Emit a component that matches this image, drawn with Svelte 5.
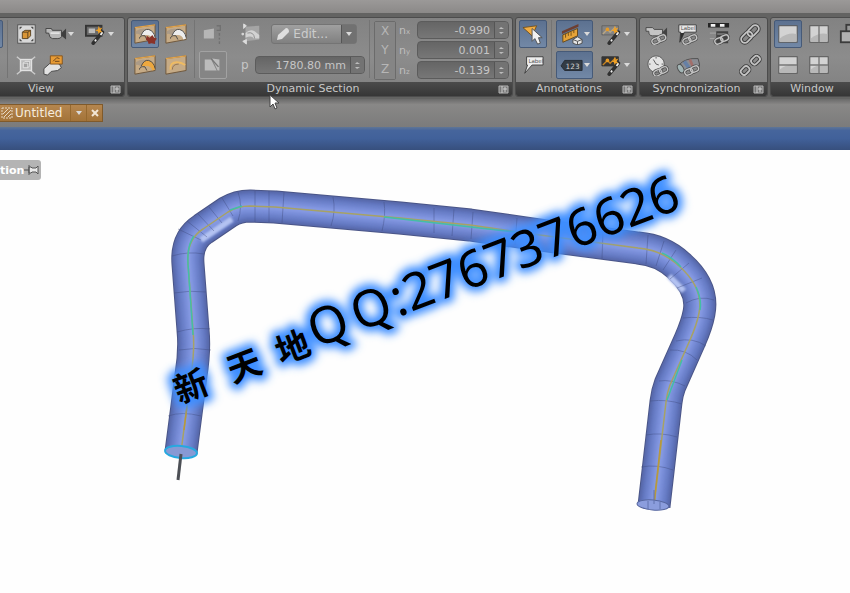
<script>
  let normals = $state([
    { axis: "X", sub: "x", value: "-0.990" },
    { axis: "Y", sub: "y", value: "0.001" },
    { axis: "Z", sub: "z", value: "-0.139" },
  ]);
  let position = $state("1780.80 mm");

  const spine =
    "M181 452 L191 375 Q195 350 193 330 L188 264 Q186 240 203 229 L228 212 Q238 206 250 206 L275 207 L400 218 L470 225 L540 235 L638 248 Q662 250 679 266 Q704 288 699 313 Q697 324 690 340 L670 385 Q667 393 666 402 L654 506";

  // layered strokes, widest first, give the pipe its round shading
  const shades = [
    { width: 33, color: "#4b5688" },
    { width: 31, color: "#5768a9" },
    { width: 27, color: "#6074bd" },
    { width: 21, color: "#6c81cb" },
    { width: 14, color: "#788dd8" },
    { width: 7, color: "#8599e2" },
  ];

  const seams = [
    "M168 416Q182 411 201 416",
    "M179 350Q195 347 211 350",
    "M177 332Q194 327 210 329",
    "M174 293Q190 290 206 292",
    "M172 256Q188 251 204 254",
    "M178 229L201 240",
    "M187 221L207 237",
    "M198 214L214 231",
    "M209 207L222 223",
    "M222 198L233 216",
    "M238 192Q243 206 238 221",
    "M255 191V222",
    "M269 191V222",
    "M284 192L282 223",
    "M333 197Q336 211 331 226",
    "M384 202Q386 215 382 231",
    "M434 208V233",
    "M454 209L452 236",
    "M473 212L471 239",
    "M517 218L515 245",
    "M603 230L602 259",
    "M648 235L646 264",
    "M664 241L656 266",
    "M676 250L663 270",
    "M689 263L670 279",
    "M702 278L677 288",
    "M714 300Q700 295 686 303",
    "M713 320Q700 316 683 318",
    "M706 346Q693 337 676 341",
    "M697 360Q686 349 670 350",
    "M685 386Q671 379 659 381",
    "M682 404Q667 399 650 401",
    "M677 437Q661 432 646 435",
    "M673 470Q657 464 641 467",
  ];
</script>

{#snippet link(x, y)}
  <g transform="translate({x} {y}) rotate(-25)" fill="none">
    <rect x="-8" y="-3" width="9" height="6" rx="3" stroke="#4c4c4c" stroke-width="3" />
    <rect x="-1" y="-3" width="9" height="6" rx="3" stroke="#4c4c4c" stroke-width="3" />
    <rect x="-8" y="-3" width="9" height="6" rx="3" stroke="#c4c4c4" stroke-width="1.5" />
    <rect x="-1" y="-3" width="9" height="6" rx="3" stroke="#c4c4c4" stroke-width="1.5" />
  </g>
{/snippet}

{#snippet wand()}
  <path d="M10 22L20 10" stroke="#303030" stroke-width="4" stroke-linecap="round" />
  <path d="M12 20L13 18M18 13L20 10" stroke="#eee" stroke-width="2" />
  <path d="M16 3l1 3 3-1-2 3 2 2-3 0-1 2-1-3-3-1 3-1z" fill="#f0a125" />
{/snippet}

{#snippet icon(name)}
  <svg class="icon" viewBox="0 0 26 24" width="24" height="22" aria-hidden="true">
    {#if name === "fit"}
      <rect x="4" y="2" width="19" height="20" fill="#d9d9d9" stroke="#4f4f4f" />
      <path d="M6 4h3L6 7zM21 4h-3l3 3zM6 20h3l-3-3zM21 20h-3l3-3z" fill="#4a4a4a" />
      <path d="M9 10l3-2h6v6l-3 3H9z" fill="#d99535" stroke="#57401f" />
      <path d="M9 10h6v7M15 10l3-2" fill="none" stroke="#57401f" />
    {:else if name === "zoombox"}
      <path d="M3 3l5 4M23 3l-5 4M3 22l5-4M23 22l-5-4" stroke="#ccc" stroke-width="1.5" />
      <rect x="7" y="6" width="12" height="12" fill="#bcbcbc" stroke="#e2e2e2" stroke-width="1.5" />
      <path d="M10 10l2-2h5v5l-2 2h-5zM10 10h5v5" fill="#a2a2a2" stroke="#e8e8e8" />
    {:else if name === "camera"}
      <path d="M2 6h6l1 2h10v7q-1 2-4 2H9q-3 0-4-6H2z" fill="#b8b8b8" stroke="#424242" />
      <path d="M19 11l5-5v12l-5-4z" fill="#3e3e3e" />
      <path d="M7 11h10" stroke="#e2e2e2" stroke-width="2" />
    {:else if name === "viewwand"}
      <rect x="2" y="3" width="17" height="11" fill="#696969" stroke="#343434" stroke-width="2" />
      <rect x="5" y="6" width="7" height="5" fill="#bbb" />
      {@render wand()}
    {:else if name === "hand"}
      <path d="M2 22V16l9-8 8 3 2 4-4 3-7 1-4 4z" fill="#e2e2e2" stroke="#454545" />
      <path d="M9 2h13v9H9z" fill="#e99c35" stroke="#80521d" />
      <path d="M12 8l4-4 3 1M14 8h5" stroke="#654019" fill="none" />
    {:else if name === "section" || name === "sectionoff" || name === "sectionfill" || name === "sectioncurve"}
      <path d="M2 5l22-3v16L2 22z" fill="#c6ab86" stroke="#6b5338" />
      <path d="M2 5l22-3" stroke="#e2a44c" stroke-width="1.5" />
      {#if name === "sectioncurve"}
        <path d="M7 17q-1-8 7-8 5 0 9 3" fill="none" stroke="#efbb62" stroke-width="2" />
        <path d="M9 17q0-6 7-6" fill="none" stroke="#94714a" />
      {:else}
        <path d="M3 9q6-4 12-2l8 5v3l-8-3-7 2q-1-3-5-2z" fill="#ab9b88" />
        <path d="M9 13q2-6 7-6 6 1 8 7v3l-3 1q-1-5-6-5-3 0-6 0z" fill={name === "sectionfill" ? "#eda83f" : "#ededed"} />
        <path d="M9 13q3-7 8-6 6 2 7 9M7 17q0-4 6-3l2 4" fill="none" stroke="#444" />
      {/if}
      {#if name === "sectionoff"}
        <path d="M15 14l3 2 3-3 2 3 3 1-2 3v3l-4-1-3 1-1-3-2-2z" fill="#8a3228" />
      {/if}
    {:else if name === "plane"}
      <path d="M3 8l11-2v11H3z" fill="#b6b6b6" />
      <path d="M17 3h4v5h-4M20 11v3M20 16v2M20 20v3" stroke="#717171" stroke-width="1.5" fill="none" />
    {:else if name === "points"}
      <path d="M7 4l15-1v15L7 20z" fill="#a5a5a5" />
      <path d="M7 11q5-5 10-2l5 4v4h-6q-2-4-9-1z" fill="#d2d2d2" />
      <path d="M9 11q7-2 8 6" stroke="#8b8b8b" fill="none" />
      <path d="M5 1l3 2-3 3zM4 20l4-2v5z" fill="#ddd" stroke="#ddd" />
      <circle cx="4" cy="12" r="1.5" fill="#d5d5d5" />
    {:else if name === "flip"}
      <path d="M4 6h7l6 12H4zM12 5l8 1v12h-2z" fill="#bcbcbc" />
      <path d="M11 5l8 9" stroke="#777" stroke-width="1.5" />
    {:else if name === "pointer"}
      <path d="M2 5l15-2-5 11z" fill="#f1ad43" stroke="#72501e" />
      <path d="M12 6v14l3-3 3 6 3-1-2-6h4z" fill="#f2f2f2" stroke="#505050" />
    {:else if name === "measure"}
      <path d="M2 9L20 1v3L2 12z" fill="#6e3f31" />
      <path d="M3 13l16-7v8L3 21z" fill="#e6a439" stroke="#664617" />
      <path d="M6 12v4M9 11v3M12 10v4M15 8v3" stroke="#6f4c18" />
      <path d="M14 18l5-3 5 3v4l-5 2-5-2z" fill="#e6e6e6" stroke="#4a4a4a" />
      <path d="M14 18l5 2 5-2M19 20v4" stroke="#4a4a4a" fill="none" />
    {:else if name === "measurewand" || name === "tagwand"}
      <path d="M2 3h18v10H2z" fill={name === "tagwand" ? "#353535" : "#858585"} stroke={name === "tagwand" ? "#353535" : "#606060"} />
      <path d="M3 12l5-5 3 3 6-6" stroke={name === "tagwand" ? "#c48222" : "#b9a582"} stroke-width="1.5" fill="none" />
      <circle cx="8" cy="7" r="2" fill="#e69a25" />
      {@render wand()}
    {:else if name === "label"}
      <path d="M6 3h18v9H12L4 21l3-9H6z" fill="#ededed" stroke="#3b3b3b" />
      <text x="8" y="10" font-size="6" fill="#555">Label</text>
    {:else if name === "tag"}
      <path d="M5 7h19v11H5l-4-5z" fill="#333b44" stroke="#232a32" />
      <text x="6" y="16" font-size="8" fill="#d2d2d2">123</text>
    {:else if name === "cameralink"}
      <path d="M1 5h7l2 2h9v7H8q-4 0-4-5H1z" fill="#c4c4c4" stroke="#474747" />
      <path d="M19 10l5-5v12z" fill="#424242" />
      {@render link(15, 18)}
    {:else if name === "labellink"}
      <path d="M3 2h19v8H9L4 21l1-11H3z" fill="#e8e8e8" stroke="#3b3b3b" />
      <path d="M5 11h4L4 21z" fill="#2e2e2e" />
      <text x="5" y="8" font-size="6" fill="#555">Label</text>
      {@render link(15, 18)}
    {:else if name === "timeline"}
      <path d="M1 0h23v5H1z" fill="#252525" />
      <path d="M4 1h5v3H4zM14 1h5v3h-5z" fill="#f3f3f3" />
      <path d="M3 11h7M3 17h7" stroke="#aaa" />
      <path d="M10 9h13v13H10z" fill="#414141" />
      <path d="M11 12h10" stroke="#aaa" />
      {@render link(16, 18)}
    {:else if name === "chain"}
      <g transform="translate(13 12) rotate(-45)" fill="none">
        <rect x="-12" y="-4" width="14" height="8" rx="4" stroke="#3e3e3e" stroke-width="4" />
        <rect x="-2" y="-4" width="14" height="8" rx="4" stroke="#3e3e3e" stroke-width="4" />
        <rect x="-12" y="-4" width="14" height="8" rx="4" stroke="#c3c3c3" stroke-width="2" />
        <rect x="-2" y="-4" width="14" height="8" rx="4" stroke="#c3c3c3" stroke-width="2" />
      </g>
    {:else if name === "unchain"}
      <g transform="translate(13 12) rotate(-45)" fill="none">
        <rect x="-13" y="-3" width="10" height="7" rx="3" stroke="#3e3e3e" stroke-width="4" />
        <rect x="3" y="-3" width="10" height="7" rx="3" stroke="#3e3e3e" stroke-width="4" />
        <rect x="-13" y="-3" width="10" height="7" rx="3" stroke="#c3c3c3" stroke-width="2" />
        <rect x="3" y="-3" width="10" height="7" rx="3" stroke="#c3c3c3" stroke-width="2" />
      </g>
    {:else if name === "clock"}
      <circle cx="12" cy="11" r="9" fill="#e3e3e3" stroke="#565656" />
      <path d="M12 3v2M4 11h2M18 11h2M9 6l3 5 3 1" stroke="#555" fill="none" />
      {@render link(17, 19)}
    {:else if name === "tube"}
      <path d="M3 12Q10 4 24 5l2 8q-10-1-16 7z" fill="#8b8d93" stroke="#4e4e4e" />
      <path d="M9 8l5 7" stroke="#6680a6" stroke-width="4" />
      <path d="M15 6l3 7" stroke="#a26f6b" stroke-width="3" />
      <ellipse cx="5" cy="16" rx="3" ry="5" fill="#a2b5b5" stroke="#4e4e4e" transform="rotate(-30 5 16)" />
      {@render link(17, 18)}
    {:else if name === "cascade"}
      <rect x="9" y="2" width="17" height="12" fill="#989898" stroke="#3b3b3b" stroke-width="2" />
      <rect x="3" y="9" width="17" height="12" fill="#b0b0b0" stroke="#3b3b3b" stroke-width="2" />
    {:else}
      <rect x="3" y="3" width="20" height="18" fill="#d3d3d3" stroke="#515151" />
      <path d="M4 17q9-7 18-5v8H4z" fill="#b8b8b8" />
      {#if name === "split-v" || name === "split-4"}
        <path d="M13 3v18" stroke="#777" stroke-width="1.5" />
      {/if}
      {#if name === "split-h" || name === "split-4"}
        <path d="M3 12h20" stroke="#777" stroke-width="1.5" />
      {/if}
    {/if}
  </svg>
{/snippet}

{#snippet tool(name, on = false, menu = false)}
  <button class="tool" class:on class:menu aria-label={name}>
    {@render icon(name)}
    {#if menu}<span class="arrow"></span>{/if}
  </button>
{/snippet}

{#snippet caption(text)}
  <div class="caption">
    <span>{text}</span>
    <button class="launcher" aria-label="{text} options">
      <svg viewBox="0 0 11 9" width="11" height="9" aria-hidden="true">
        <path d="M1 1h9v7H1z" fill="#777" stroke="#b5b5b5" />
        <path d="M4 1v7M5 4h4M7 2v5" stroke="#d0d0d0" />
      </svg>
    </button>
  </div>
{/snippet}

{#snippet spinner()}
  <button class="spin" aria-label="step">
    <svg viewBox="0 0 7 9" width="7" height="9" aria-hidden="true">
      <path d="M1 3l2-2 3 2zM1 6h5L3 8z" fill="#bcbcbc" />
    </svg>
  </button>
{/snippet}

<div class="app">
  <div class="titlebar"></div>
  <nav class="ribbon">
    <section class="group view">
      <div class="body">
        <div class="tools one">{@render tool("home", true)}</div>
        <i class="sep"></i>
        <div class="tools one">
          {@render tool("fit")}
          {@render tool("zoombox")}
        </div>
        <div class="tools two">
          {@render tool("camera", false, true)}
          {@render tool("viewwand", false, true)}
          {@render tool("hand")}
        </div>
      </div>
      {@render caption("View")}
    </section>

    <section class="group">
      <div class="body">
        <div class="tools two">
          {@render tool("sectionoff", true)}
          {@render tool("section")}
          {@render tool("sectionfill")}
          {@render tool("sectioncurve")}
        </div>
        <i class="sep"></i>
        <div class="tools one">
          {@render tool("plane")}
          <button class="tool framed" aria-label="flip">{@render icon("flip")}</button>
        </div>
        <div class="edit">
          <div class="row">
            {@render tool("points")}
            <button class="edit-button">
              <svg viewBox="0 0 14 14" width="14" height="14" aria-hidden="true">
                <path d="M1 13l1-5 8-7q3 0 3 4l-7 7z" fill="#dedede" />
              </svg>
              <span>Edit...</span>
              <span class="drop"><span class="arrow"></span></span>
            </button>
          </div>
          <div class="row">
            <label for="position">p</label>
            <div class="field"><input id="position" bind:value={position} />{@render spinner()}</div>
          </div>
        </div>
        <i class="sep"></i>
        <div class="axes">
          {#each normals as n (n.axis)}
            <button>{n.axis}</button>
          {/each}
        </div>
        <div class="normals">
          {#each normals as n (n.axis)}
            <label for="n-{n.sub}">n<small>{n.sub}</small></label>
            <div class="field"><input id="n-{n.sub}" bind:value={n.value} />{@render spinner()}</div>
          {/each}
        </div>
      </div>
      {@render caption("Dynamic Section")}
    </section>

    <section class="group">
      <div class="body">
        <div class="tools one">
          {@render tool("pointer", true)}
          {@render tool("label")}
        </div>
        <i class="sep"></i>
        <div class="tools two">
          {@render tool("measure", true, true)}
          {@render tool("measurewand", false, true)}
          {@render tool("tag", true, true)}
          {@render tool("tagwand", false, true)}
        </div>
      </div>
      {@render caption("Annotations")}
    </section>

    <section class="group">
      <div class="body">
        <div class="tools four">
          {@render tool("cameralink")}
          {@render tool("labellink")}
          {@render tool("timeline")}
          {@render tool("chain")}
          {@render tool("clock")}
          {@render tool("tube")}
          <span></span>
          {@render tool("unchain")}
        </div>
      </div>
      {@render caption("Synchronization")}
    </section>

    <section class="group">
      <div class="body">
        <div class="tools three">
          {@render tool("single", true)}
          {@render tool("split-v")}
          {@render tool("cascade")}
          {@render tool("split-h")}
          {@render tool("split-4")}
        </div>
      </div>
      {@render caption("Window")}
    </section>
  </nav>

  <div class="tabs">
    <div class="tab">
      <svg viewBox="0 0 12 12" width="12" height="12" aria-hidden="true">
        <path d="M1 1h10v10H1z" fill="none" stroke="#e8d9c4" stroke-dasharray="2 1" />
        <path d="M2 7l5-5M3 10l7-7M7 10l3-3" stroke="#e8d9c4" />
      </svg>
      <span class="name">Untitled</span>
      <button aria-label="tab menu"><span class="arrow"></span></button>
      <button aria-label="close">
        <svg viewBox="0 0 8 8" width="8" height="8" aria-hidden="true">
          <path d="M1 1l6 6M7 1L1 7" stroke="#f3e6d4" stroke-width="2" />
        </svg>
      </button>
    </div>
  </div>
  <div class="header"></div>

  <main class="viewport">
    <div class="pinned">
      <span>tion</span>
      <svg viewBox="0 0 16 12" width="16" height="12" aria-hidden="true">
        <path d="M0 6h5M5 1v10M5 3h2l1 1h4l2-2v8l-2-2H8L7 9H5z" fill="#e8e8e8" stroke="#555" />
      </svg>
    </div>
    <svg class="scene" viewBox="0 150 850 443">
      <defs>
        <filter id="soft" x="-10%" y="-10%" width="120%" height="120%">
          <feGaussianBlur stdDeviation="1" />
        </filter>
        <filter id="glow" filterUnits="userSpaceOnUse" x="-320" y="-100" width="700" height="200">
          <feGaussianBlur stdDeviation="4" />
        </filter>
      </defs>

      <g fill="none" stroke-linejoin="round">
        {#each shades as shade, i (shade.width)}
          <path d={spine} stroke={shade.color} stroke-width={shade.width} filter={i > 1 ? "url(#soft)" : null} />
        {/each}
        <path d="M201 240L232 219M669 276L684 291" stroke="#b4c3f2" stroke-width="6" filter="url(#soft)" />
        <g stroke="#3e4a7c" opacity="0.4">
          {#each seams as seam (seam)}
            <path d={seam} />
          {/each}
        </g>
        <path d={spine} stroke="#a7a264" stroke-width="1.5" />
        <path
          d="M193 335L188 264Q187 245 194 236M230 210L242 206M384 217L515 232M662 253Q672 257 681 267M696 287Q702 300 700 310M682 360L667 400"
          stroke="#43bea6"
          stroke-width="1.5"
        />
        <path d="M184 430L191 375M661 440L654 504" stroke="#b8983d" stroke-width="1.5" />
      </g>
      <ellipse cx="181" cy="452" rx="16" ry="6" fill="#8799d4" stroke="#27a8df" stroke-width="2" transform="rotate(5 181 452)" />
      <path d="M181 454L178 480" stroke="#4c4f55" stroke-width="3" />
      <ellipse cx="653" cy="505" rx="16" ry="5" fill="#8b9ddd" stroke="#56669f" transform="rotate(5 653 505)" />
      <path d="M648 501v8M654 490v14M660 502v7" stroke="#6173ae" />

      <g transform="translate(411 312) rotate(-21)">
        {#each ["halo", "ink"] as layer (layer)}
          <g class="mark {layer}">
            <text class="han" x="-249 -192 -140" y="3">新天地</text>
            <text x="-102 -56 -14" y="0">QQ:</text>
            <text x="0" y="0">2767376626</text>
          </g>
        {/each}
      </g>
    </svg>
  </main>

  <svg class="cursor" viewBox="0 0 10 16" width="10" height="16" aria-hidden="true">
    <path d="M1 1v12l3-3 2 5 2-1-2-5h4z" fill="#fff" stroke="#444" />
  </svg>
</div>

<style>
  :global(body) {
    background: #fefefe;
  }

  .app {
    position: relative;
    overflow: hidden;
    min-height: 100vh;
    font-family: "DejaVu Sans", Verdana, sans-serif;
    font-size: 11px;
    color: #d4d4d4;
  }

  button,
  input {
    font: inherit;
    color: inherit;
    margin: 0;
    padding: 0;
    border: 0;
    background: none;
  }

  svg {
    display: block;
    flex: none;
  }

  .titlebar {
    height: 13px;
    background: linear-gradient(#9b9998, #8b8988);
  }

  .ribbon {
    display: flex;
    gap: 2px;
    padding: 4px 0 2px;
    overflow: hidden;
    background: #636362;
    box-sizing: border-box;
  }

  .group {
    flex: none;
    border: 1px solid #4c4c4c;
    border-radius: 3px;
    background: linear-gradient(#828282, #8c8c8c 50%, #7f7f7f);
    overflow: hidden;
  }

  .view {
    margin-left: -29px;
  }

  .view .body {
    padding-right: 7px;
  }

  .body {
    display: flex;
    align-items: flex-start;
    height: 64px;
    padding: 2px 3px 0;
    box-sizing: border-box;
  }

  .tools {
    display: grid;
    gap: 3px;
    justify-items: start;
  }

  .two {
    grid-template-columns: auto auto;
  }

  .three {
    grid-template-columns: repeat(3, auto);
  }

  .four {
    grid-template-columns: repeat(4, auto);
  }

  .tool {
    display: flex;
    align-items: center;
    justify-content: center;
    width: 28px;
    height: 28px;
    border: 1px solid transparent;
    border-radius: 2px;
    box-sizing: border-box;
  }

  .tool.menu {
    width: 37px;
  }

  .tool.on {
    border-color: #465a78;
    background: linear-gradient(#5c7190, #7288a6);
  }

  .framed {
    border-color: #a2a2a2;
    background: #858585;
  }

  .arrow {
    flex: none;
    border: 3px solid transparent;
    border-top: 4px solid #dadada;
    border-bottom: 0;
  }

  .sep {
    width: 1px;
    height: 58px;
    margin: 0 4px;
    background: #747474;
  }

  .caption {
    display: flex;
    align-items: center;
    height: 14px;
    padding-right: 3px;
    background: linear-gradient(#4b4b4b, #363636);
    color: #c8c8c8;
    line-height: 14px;
    text-align: center;
  }

  .caption span {
    flex: 1;
  }

  .edit {
    display: flex;
    flex-direction: column;
    gap: 3px;
    width: 128px;
    margin-left: 10px;
  }

  .row {
    display: flex;
    align-items: center;
    justify-content: space-between;
    height: 28px;
  }

  .row label {
    margin-left: 4px;
    font-size: 12px;
    color: #c6c6c6;
  }

  .edit-button {
    display: flex;
    align-items: center;
    gap: 3px;
    height: 20px;
    margin-right: 8px;
    padding-left: 4px;
    border: 1px solid #747474;
    border-radius: 3px;
    background: linear-gradient(#a0a0a0, #808080);
    color: #ccc;
    font-size: 12px;
    box-sizing: border-box;
  }

  .drop {
    display: flex;
    align-items: center;
    height: 18px;
    margin-left: 10px;
    padding: 0 4px;
    border-left: 1px solid #555;
    background: #717171;
  }

  .field {
    display: flex;
    align-items: center;
    height: 18px;
    border: 1px solid #5c5c5c;
    border-radius: 4px;
    background: linear-gradient(#656565, #777);
    color: #c6c6c6;
    overflow: hidden;
    box-sizing: border-box;
  }

  .row .field {
    width: 110px;
  }

  .field input {
    flex: 1;
    min-width: 0;
    padding-right: 4px;
    text-align: right;
    outline: none;
  }

  .spin {
    display: flex;
    align-items: center;
    justify-content: center;
    width: 14px;
    height: 16px;
    border-left: 1px solid #555;
    background: #737373;
  }

  .axes {
    display: flex;
    flex-direction: column;
    border: 1px solid #6b6b6b;
    border-radius: 2px;
    margin-top: 1px;
  }

  .axes button {
    width: 20px;
    height: 19px;
    background: #858585;
    color: #b6b6b6;
    font-size: 12px;
    line-height: 19px;
  }

  .normals {
    display: grid;
    grid-template-columns: 14px 92px;
    gap: 2px 4px;
    align-items: center;
    margin: 1px 0 0 3px;
    color: #bebebe;
  }

  .normals small {
    font-size: 7px;
  }

  .tabs {
    padding: 5px 0 5px;
    background: linear-gradient(#6a6a6a, #898887 20%, #7b7b7b);
  }

  .tab {
    display: inline-flex;
    align-items: center;
    height: 18px;
    padding-left: 1px;
    border: 1px solid #805a2b;
    border-left: 0;
    background: linear-gradient(#b5864f, #a37338);
    color: #f6ecdd;
    font-size: 12px;
    box-sizing: border-box;
    vertical-align: top;
  }

  .name {
    margin: 0 8px 0 2px;
  }

  .tab button {
    display: flex;
    align-items: center;
    justify-content: center;
    width: 16px;
    height: 16px;
    border-left: 1px solid #96692f;
  }

  .header {
    height: 23px;
    background: linear-gradient(#5f7596, #46659c 15%, #41619a 50%, #374f7d);
  }

  .viewport {
    position: relative;
    background: #fefefe;
  }

  .pinned {
    position: absolute;
    left: 0;
    top: 10px;
    display: flex;
    align-items: center;
    height: 20px;
    padding-right: 1px;
    border-radius: 0 3px 3px 0;
    background: #b4b4b4;
    color: #fff;
    font-size: 11px;
    font-weight: bold;
  }

  .scene {
    width: 100%;
    height: auto;
  }

  .mark {
    font-family: "Noto Sans", "Open Sans", sans-serif;
    font-size: 51px;
  }

  .han {
    font-family: "Noto Sans CJK SC", sans-serif;
    font-size: 34px;
    font-weight: bold;
  }

  .halo {
    fill: #3d8eff;
    stroke: #3d8eff;
    stroke-width: 10px;
    stroke-linejoin: round;
    filter: url(#glow);
  }

  .ink {
    fill: #000;
  }

  .cursor {
    position: absolute;
    left: 269px;
    top: 94px;
  }
</style>
